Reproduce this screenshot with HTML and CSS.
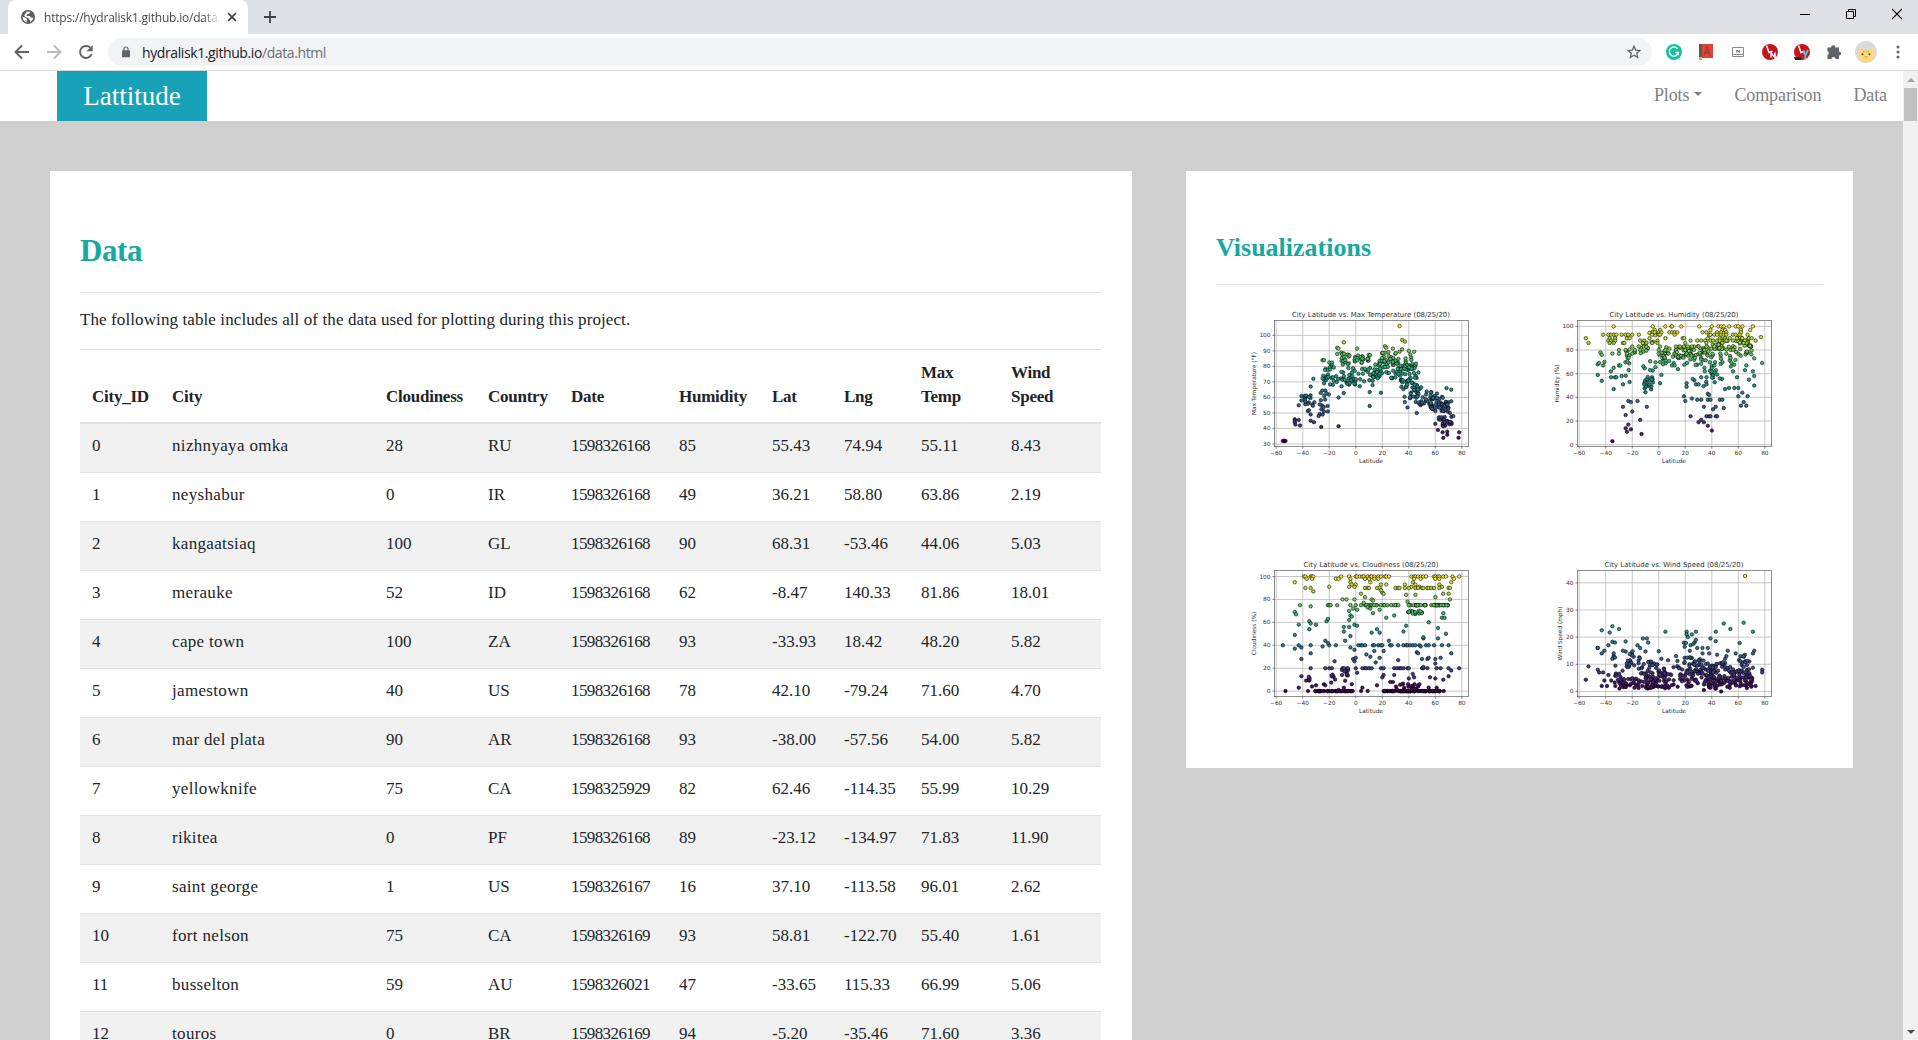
FILE: index.html
```html
<!DOCTYPE html>
<html lang="en">
<head>
<meta charset="utf-8">
<title>Lattitude - Data</title>
<link rel="stylesheet" href="styles.css">
</head>
<body>
<div class="browser">
  <header class="tabstrip">
    <div class="tab">
      <svg class="globe" width="14" height="14" viewBox="0 0 14 14"><circle cx="7" cy="7" r="7" fill="#5a5e63"/><path d="M1.6 6.4 5 8.300q1.600.500 1 1.800l-.6 2.300Q2 11.500 1.600 6.400zM5.800 1.700h3.400L8 3.700 6.200 4.300 5.500 6.100h3.300l1 1.500 2.500.2Q11.800 11 9 12.200l.3-2.100-1.600-.900-.4-1.500-3-.5-1.100-1.800z" fill="#fff"/></svg>
      <span class="tab-title">https://hydralisk1.github.io/data.</span>
      <svg class="tab-close" width="10" height="10" viewBox="0 0 10 10"><path d="M1.200 1.200l7.600 7.600M8.800 1.200 1.200 8.800" stroke="#3c4043" stroke-width="1.700"/></svg>
    </div>
    <svg class="new-tab" width="12" height="12" viewBox="0 0 12 12"><path d="M6 0v12M0 6h12" stroke="#3c4043" stroke-width="1.800"/></svg>
    <div class="window-buttons">
      <svg width="10" height="12" viewBox="0 0 10 12"><path d="M0 6.500h10" stroke="#000"/></svg>
      <svg width="10" height="12" viewBox="0 0 10 12"><path d="M.5 3.500h7v7h-7zM2.500 3.500v-2h7v7h-2" fill="none" stroke="#000"/></svg>
      <svg width="10" height="12" viewBox="0 0 10 12"><path d="M0 1l10 10M10 1 0 11" stroke="#000" stroke-width="1.100"/></svg>
    </div>
  </header>
  <div class="toolbar">
    <svg class="nav-icon" width="16" height="16" viewBox="0 0 16 16"><path d="M15 8H2M8 1.500 1.500 8 8 14.500" fill="none" stroke="#5f6368" stroke-width="1.900"/></svg>
    <svg class="nav-icon" width="16" height="16" viewBox="0 0 16 16"><path d="M1 8h13M8 1.500 14.500 8 8 14.500" fill="none" stroke="#babcbe" stroke-width="1.900"/></svg>
    <svg class="nav-icon" width="16" height="16" viewBox="0 0 16 16"><path d="M13.600 10.200A6 6 0 1 1 12.300 3.700" fill="none" stroke="#5f6368" stroke-width="1.900"/><path d="M14.700 1v6.200H8.500z" fill="#5f6368"/></svg>
    <div class="omnibox">
      <svg width="8" height="12" viewBox="0 0 8 12"><path d="M2 5V3a2 2 0 0 1 4 0v2" fill="none" stroke="#5f6368" stroke-width="1.200"/><rect y="4.300" width="8" height="7" rx=".8" fill="#5f6368"/></svg>
      <span class="url">hydralisk1.github.io<span class="path">/data.html</span></span>
      <svg class="star" width="14" height="14" viewBox="0 0 14 14"><path d="M7 1.200 8.700 5.100l4.200.4-3.200 2.800 1 4.200L7 10.300l-3.700 2.200 1-4.200L1.100 5.500l4.200-.4z" fill="none" stroke="#5f6368" stroke-width="1.300"/></svg>
    </div>
    <div class="extensions">
      <svg width="16" height="16" viewBox="0 0 16 16"><circle cx="8" cy="8" r="8" fill="#15c39a"/><path d="M11.500 4.700A4.600 4.600 0 1 0 12.400 8.500H9M12.400 8.500l-.5 2.700" fill="none" stroke="#fff" stroke-width="1.400"/></svg>
      <svg width="16" height="16" viewBox="0 0 16 16"><path d="M1 0h14v15H1z" fill="#db4437"/><path d="M1 0h3v13H1z" fill="#5f5656"/><path d="M4 14h11v1H4z" fill="#fff"/><path d="M1 13h3v3H1z" fill="#f4b400"/><path d="M6 11.500 9 3l3 8.500M7 8.500h4" fill="none" stroke="#ad352c" stroke-width="1.300"/></svg>
      <svg width="16" height="16" viewBox="0 0 16 16"><path d="M2.500 3.500h11v9h-11zM2.500 10.500h11" fill="#fafafa" stroke="#8b8b8b"/><path d="M6.800 8.500V6l2.400 2.500V6" fill="none" stroke="#555" stroke-width=".9"/></svg>
      <svg width="16" height="16" viewBox="0 0 16 16"><circle cx="8" cy="8" r="8" fill="#c9141b"/><path d="M4.500 1.500 7 8.500l3.500-1.300M9 13.500 9 9l4 4.500V8.500" fill="none" stroke="#fff" stroke-width="1.500"/></svg>
      <svg width="16" height="16" viewBox="0 0 16 16"><circle cx="8" cy="8" r="8" fill="#c9141b"/><path d="M4.500 1.500 7 8.500l3.500-1.300" fill="none" stroke="#fff" stroke-width="1.500"/><path d="M0 13l7 .5V16H1z" fill="#222"/><path d="M9 7l2.500 4L14 6M11.500 10 11 16" fill="none" stroke="#4fd0d8" stroke-width="1.800"/></svg>
      <svg width="16" height="16" viewBox="0 0 16 16"><path d="M1.500 3.500H5a2.200 2.200 0 1 1 4.400 0h3.600v3.900a2.100 2.100 0 1 1 0 4.200V15H9.600a2.100 2.100 0 0 0-4.200 0H1.500v-4a2.100 2.100 0 0 0 0-3.900z" fill="#5f6368"/></svg>
      <svg class="avatar" width="22" height="22" viewBox="0 0 22 22"><circle cx="11" cy="11" r="11" fill="#dadada"/><path d="M4.500 6.500 8.500 9.500h5l4-3q1.200 3 .8 10Q15.500 21.500 11 21.500T3.700 16.500Q3.300 9.500 4.500 6.500z" fill="#fdd978"/><circle cx="7.500" cy="13.300" r="1" fill="#4f4631"/><circle cx="14.500" cy="13.300" r="1" fill="#4f4631"/><path d="M9.500 15.500q.8 1 1.500 0 .8 1 1.500 0M8.800 9.500v2M11 9.500v2M13.200 9.500v2" fill="none" stroke="#c98d3d" stroke-width=".8"/></svg>
      <svg class="kebab" width="4" height="14" viewBox="0 0 4 14"><circle cx="2" cy="2" r="1.500" fill="#5f6368"/><circle cx="2" cy="7" r="1.500" fill="#5f6368"/><circle cx="2" cy="12" r="1.500" fill="#5f6368"/></svg>
    </div>
  </div>
  <div class="viewport">
    <div class="page">
      <nav class="navbar">
        <a class="brand">Lattitude</a>
        <div class="links"><a class="plots">Plots<i class="caret"></i></a><a class="comparison">Comparison</a><a class="data-link">Data</a></div>
      </nav>
      <main class="content">
        <section class="card data-card">
          <h1>Data</h1>
          <p class="intro">The following table includes all of the data used for plotting during this project.</p>
          <table>
            <colgroup><col class="c-id"><col class="c-city"><col class="c-cloud"><col class="c-country"><col class="c-date"><col class="c-hum"><col class="c-lat"><col class="c-lng"><col class="c-temp"><col class="c-wind"></colgroup>
            <thead><tr><th>City_ID</th><th>City</th><th>Cloudiness</th><th>Country</th><th>Date</th><th>Humidity</th><th>Lat</th><th>Lng</th><th>Max<br>Temp</th><th>Wind<br>Speed</th></tr></thead>
            <tbody>
              <tr><td>0</td><td>nizhnyaya omka</td><td>28</td><td>RU</td><td>1598326168</td><td>85</td><td>55.43</td><td>74.94</td><td>55.11</td><td>8.43</td></tr>
              <tr><td>1</td><td>neyshabur</td><td>0</td><td>IR</td><td>1598326168</td><td>49</td><td>36.21</td><td>58.80</td><td>63.86</td><td>2.19</td></tr>
              <tr><td>2</td><td>kangaatsiaq</td><td>100</td><td>GL</td><td>1598326168</td><td>90</td><td>68.31</td><td>-53.46</td><td>44.06</td><td>5.03</td></tr>
              <tr><td>3</td><td>merauke</td><td>52</td><td>ID</td><td>1598326168</td><td>62</td><td>-8.47</td><td>140.33</td><td>81.86</td><td>18.01</td></tr>
              <tr><td>4</td><td>cape town</td><td>100</td><td>ZA</td><td>1598326168</td><td>93</td><td>-33.93</td><td>18.42</td><td>48.20</td><td>5.82</td></tr>
              <tr><td>5</td><td>jamestown</td><td>40</td><td>US</td><td>1598326168</td><td>78</td><td>42.10</td><td>-79.24</td><td>71.60</td><td>4.70</td></tr>
              <tr><td>6</td><td>mar del plata</td><td>90</td><td>AR</td><td>1598326168</td><td>93</td><td>-38.00</td><td>-57.56</td><td>54.00</td><td>5.82</td></tr>
              <tr><td>7</td><td>yellowknife</td><td>75</td><td>CA</td><td>1598325929</td><td>82</td><td>62.46</td><td>-114.35</td><td>55.99</td><td>10.29</td></tr>
              <tr><td>8</td><td>rikitea</td><td>0</td><td>PF</td><td>1598326168</td><td>89</td><td>-23.12</td><td>-134.97</td><td>71.83</td><td>11.90</td></tr>
              <tr><td>9</td><td>saint george</td><td>1</td><td>US</td><td>1598326167</td><td>16</td><td>37.10</td><td>-113.58</td><td>96.01</td><td>2.62</td></tr>
              <tr><td>10</td><td>fort nelson</td><td>75</td><td>CA</td><td>1598326169</td><td>93</td><td>58.81</td><td>-122.70</td><td>55.40</td><td>1.61</td></tr>
              <tr><td>11</td><td>busselton</td><td>59</td><td>AU</td><td>1598326021</td><td>47</td><td>-33.65</td><td>115.33</td><td>66.99</td><td>5.06</td></tr>
              <tr><td>12</td><td>touros</td><td>0</td><td>BR</td><td>1598326169</td><td>94</td><td>-5.20</td><td>-35.46</td><td>71.60</td><td>3.36</td></tr>
            </tbody>
          </table>
        </section>
        <aside class="card viz-card">
          <h2>Visualizations</h2>
          <div class="plots-grid">
            <svg class="plot" id="temperature" width="250" height="167" viewBox="0 0 250 167"></svg>
            <svg class="plot" id="humidity" width="250" height="167" viewBox="0 0 250 167"></svg>
            <svg class="plot" id="cloudiness" width="250" height="167" viewBox="0 0 250 167"></svg>
            <svg class="plot" id="wind" width="250" height="167" viewBox="0 0 250 167"></svg>
          </div>
        </aside>
      </main>
    </div>
    <div class="scrollbar"><i class="up"></i><div class="thumb"></div><i class="down"></i></div>
  </div>
</div>
<script src="charts.js"></script>
</body>
</html>
```
FILE: styles.css
```css
* { box-sizing: border-box; }
body { margin: 0; height: 1040px; overflow: hidden; font-family: "Liberation Serif", serif; font-size: 17px; color: #212529; }
.browser { display: flex; flex-direction: column; height: 1040px; }
svg { display: block; flex: none; }

.tabstrip { display: flex; height: 34px; padding-left: 8px; background: #dee1e6; font-family: "Open Sans", sans-serif; }
.tab { display: flex; align-items: center; width: 240px; padding-left: 13px; background: #fff; border-radius: 8px 8px 0 0; }
.tab-title { width: 177px; margin-left: 9px; overflow: hidden; white-space: nowrap; font-size: 12px; letter-spacing: -.2px; color: #45494d; -webkit-mask-image: linear-gradient(90deg, #000 90%, transparent 100%); }
.tab-close { margin-left: 6px; }
.new-tab { margin: 11px 0 0 16px; }
.window-buttons { display: flex; gap: 36px; margin: 8px 16px 0 auto; }
.toolbar { display: flex; align-items: center; height: 37px; padding-left: 14px; border-bottom: 1px solid #d8d9db; background: #fff; }
.nav-icon { margin-right: 16px; }
.omnibox { display: flex; align-items: center; width: 1544px; height: 28px; margin-left: -2px; padding: 0 11px 0 14px; border-radius: 14px; background: #f1f3f4; }
.url { margin-left: 12px; font: 14px "Open Sans", sans-serif; letter-spacing: -.4px; color: #202124; }
.path { color: #6b6f74; }
.star { margin-left: auto; }
.extensions { display: flex; align-items: center; gap: 16px; margin-left: 14px; }
.avatar { margin-left: -3px; }
.kebab { margin-left: 3px; }

.viewport { display: flex; flex: 1; min-height: 0; }
.page { width: 1903px; overflow: hidden; background: #d0d0d0; }
.navbar { display: flex; justify-content: space-between; height: 50px; padding: 0 16px 0 57px; background: #fff; }
.brand { width: 150px; background: #17a2b8; color: #fff; font-size: 27px; line-height: 50px; text-align: center; }
.links { display: flex; gap: 32px; color: #808080; font-size: 18px; letter-spacing: -.1px; line-height: 48px; }
.caret { display: inline-block; margin-left: 5px; vertical-align: 5px; border: 4.500px solid transparent; border-top-color: #808080; border-bottom: 0; }
.content { display: flex; align-items: flex-start; gap: 54px; padding: 50px 50px 0; }
.card { flex: none; background: #fff; }
.data-card { width: 1082px; height: 900px; padding: 60px 31px 0 30px; overflow: hidden; }
.viz-card { width: 667px; height: 597px; padding: 60px 30px 0; }
h1, h2 { margin: 0; color: #17a99f; font-weight: 700; border-bottom: 1px solid #e3e3e3; }
h1 { height: 62px; font-size: 31px; line-height: 40px; letter-spacing: -.4px; }
h2 { height: 54px; font-size: 26px; line-height: 33px; }
.intro { height: 56px; margin: 0; line-height: 54px; letter-spacing: .1px; white-space: nowrap; }
table { width: 1021px; table-layout: fixed; border-collapse: separate; border-spacing: 0; line-height: 24px; }
th, td { border-top: 1px solid #dee2e6; text-align: left; white-space: nowrap; }
th { height: 75px; padding: 11px 0 13px 12px; vertical-align: bottom; border-bottom: 2px solid #dee2e6; letter-spacing: -.25px; }
td { height: 49px; padding: 10px 0 14px 12px; }
td:nth-child(2) { letter-spacing: .33px; }
td:nth-child(5) { letter-spacing: -.6px; }
tbody tr:first-child td { border-top: 0; height: 48px; }
tbody tr:nth-child(odd) { background: #f1f1f1; }
.c-id { width: 80px; }
.c-city { width: 214px; }
.c-cloud { width: 102px; }
.c-country { width: 83px; }
.c-date { width: 108px; }
.c-hum { width: 93px; }
.c-lat { width: 72px; }
.c-lng { width: 77px; }
.c-temp { width: 90px; }
.c-wind { width: 102px; }
.plots-grid { display: grid; grid-template-columns: 1fr 1fr; grid-auto-rows: 250px; justify-items: center; margin-top: 15px; }
.plot text { font-family: "DejaVu Sans", sans-serif; fill: #333; }
.tick { font-size: 5.800px; }
.title { font-size: 6.950px; }

.scrollbar { display: flex; flex-direction: column; align-items: center; width: 15px; background: #f1f1f1; }
.up, .down { width: 0; height: 0; border: 4px solid transparent; }
.up { margin-top: 7px; border-top: 0; border-bottom: 4px solid #a3a3a3; }
.down { margin: auto 0 6px; border-bottom: 0; border-top: 4px solid #505050; }
.thumb { width: 13px; height: 33px; margin-top: 6px; background: #c1c1c1; }
```
FILE: charts.js
```js
const NS = 'http://www.w3.org/2000/svg';
const VIRIDIS = [[68,1,84],[72,40,120],[62,74,137],[49,104,142],[38,130,142],[31,158,137],[53,183,121],[109,205,89],[180,222,44],[253,231,37]];
const BOX = { left: 31.5, right: 225.5, top: 20.5, bottom: 146.7 };

function random(seed) {
  return () => { seed = (seed * 1664525 + 1013904223) >>> 0; return seed / 4294967296; };
}
function colour(t) {
  const p = Math.max(0, Math.min(.9999, t)) * 9, i = Math.floor(p), f = p - i;
  return `rgb(${VIRIDIS[i].map((c, k) => Math.round(c + (VIRIDIS[i + 1][k] - c) * f))})`;
}
function add(parent, name, attrs, text) {
  const e = document.createElementNS(NS, name);
  for (const k in attrs) e.setAttribute(k, attrs[k]);
  if (text) e.textContent = text;
  parent.appendChild(e);
}

/* bands: [lat0, lat1, low0, high0, low1, high1, count]; rows: [value, [lat, ...]] */
function draw(id, cfg) {
  const svg = document.getElementById(id), rnd = random(cfg.seed);
  const X = lat => 33.2 + (lat + 60) * 1.326;
  const Y = v => cfg.y0 - (v - cfg.v0) * cfg.scale;
  const line = (x1, y1, x2, y2, stroke, w) => add(svg, 'line', { x1, y1, x2, y2, stroke, 'stroke-width': w });
  for (let lat = -60; lat <= 80; lat += 20) {
    line(X(lat), BOX.top, X(lat), BOX.bottom, '#b0b0b0', .7);
    line(X(lat), BOX.bottom, X(lat), BOX.bottom + 2, '#333', .6);
    add(svg, 'text', { x: X(lat), y: 155, class: 'tick', 'text-anchor': 'middle' }, String(lat).replace('-', '\u2212'));
  }
  for (const v of cfg.ticks) {
    line(BOX.left, Y(v), BOX.right, Y(v), '#b0b0b0', .7);
    line(BOX.left - 2, Y(v), BOX.left, Y(v), '#333', .6);
    add(svg, 'text', { x: BOX.left - 4, y: Y(v) + 2, class: 'tick', 'text-anchor': 'end' }, String(v));
  }
  const pts = [];
  for (const [a, b, l0, h0, l1, h1, n] of cfg.bands)
    for (let i = 0; i < n * cfg.density; i++) {
      const t = rnd(), lo = l0 + (l1 - l0) * t, hi = h0 + (h1 - h0) * t;
      pts.push([a + (b - a) * t, lo + (hi - lo) * rnd()]);
    }
  for (const [v, lats] of cfg.rows || []) for (const lat of lats) pts.push([lat, v]);
  pts.push(...cfg.points);
  for (const [lat, v] of pts)
    add(svg, 'circle', { cx: X(lat).toFixed(2), cy: Y(v).toFixed(2), r: 1.750, fill: colour((v - cfg.min) / (cfg.max - cfg.min)), stroke: '#000', 'stroke-width': .550 });
  add(svg, 'rect', { x: BOX.left, y: BOX.top, width: 194, height: 126.2, fill: 'none', stroke: '#444', 'stroke-width': .6 });
  add(svg, 'text', { x: 128, y: 17, class: 'title', 'text-anchor': 'middle', textLength: cfg.titleWidth }, 'City Latitude vs. ' + cfg.title + ' (08/25/20)');
  add(svg, 'text', { x: 128, y: 163.300, class: 'tick', 'text-anchor': 'middle' }, 'Latitude');
  add(svg, 'text', { transform: `translate(${cfg.labelX} 83.5) rotate(-90)`, class: 'tick', 'text-anchor': 'middle' }, cfg.label);
}

draw('temperature', {
  seed: 7, density: .66, title: 'Max Temperature', titleWidth: 158, label: 'Max Temperature (\u00b0F)', labelX: 12.500,
  v0: 30, y0: 144, scale: 1.552, min: 32, max: 106, ticks: [30,40,50,60,70,80,90,100],
  bands: [[-39,-31,51,61,50,63,25],[-29,-19,48,63,55,67,20],[-26,-16,68,78,71,83,30],[-20,-8,57,72,60,76,14],
    [-11,0,67,79,68,79,40],[-11,0,81,89,82,87,32],[0,13,66,80,68,80,25],[1,11,81,88,83,89,28],
    [13,20,70,80,74,86,35],[18,32,79,89,80,90,48],[26,46,71,84,68,81,52],[32,46,78,91,77,86,27],
    [34,47,60,73,59,73,42],[44,58,55,69,54,64,57],[56,70,51,64,51,61,52],[62,73,41,49,42,48,34],[60,70,51,57,50,56,28],[12,49,75,79,75,81,30]],
  points: [[33,106],[35,97],[37,96],[-9,95.5],[-14,92],[-13,91.5],[1,91.5],[22,93],[23,92],[28,91.5],[35,91],[40,90],[44,89.5],[-25,84],[-24,84],[-14,88],[-20,82.5],[-18,82.5],[-32,72],[-34,67],[10.5,63.5],[19,63],[10.5,54.5],[-13,41.5],[-26,41],[-46,46],[-46,45],[-43,45.5],[-46,44],[-45.5,42.5],[-42,42],[-54,32],[-53,32],[-55,32],[-34,45],[-31.5,44],[-41,61],[-41,58],[-43,55],[-34,49],[-28,48],[-25,49],[-21,51],[-24,51],[78,37.5],[77.5,34],[66,34],[65.5,37.5],[69,36],[72,65],[68.5,66],[72,57.5],[62,39],[60,43],[69,38],[73.5,48],[71,50],[46,50],[39,53.5],[37,57]]
});
draw('humidity', {
  seed: 21, density: .62, title: 'Humidity', titleWidth: 129, label: 'Humidity (%)', labelX: 13,
  v0: 0, y0: 144.7, scale: 1.183, min: 3, max: 100, ticks: [0,20,40,60,80,100],
  bands: [[-26,-16,70,80,77,84,12],[-19,-3,76,83,80,92,22],[-12,-2,50,70,49,73,26],[-11,-5,43,58,45,58,14],[0,15,68,83,67,83,38],
    [13,35,73,84,74,83,66],[13,35,62,74,68,79,20],[34,50,72,86,73,84,32],[45,70,80,90,76,91,46],[25,48,52,74,53,73,30],[48,60,64,82,66,84,18],[60,70,75,97,76,93,28],
    [33,41,48,67,48,63,10],[-8,2,90,96,93,99,8],[-26,-20,56,72,61,72,8]],
  rows: [[100,[-34,-4.5,5,9.5,10,17,30.5,40,45,47,49,53,58,60,63,71]],[97,[-3,1,39,48,50,62,69]],[95,[-3,0,2,8,10,12,14,33,36,44,47,51,62]],
    [93,[-42,-38,-36,-34,-32,-28,-25,-23,-20,-15,-5,0,1,12,38,39,42,44,47,49,51,56,58,61,67]],[90,[-37,-33,-24,-22,-7,5,18,19,37,46,50,59,63,68,70]],[88,[-38,-36,-33,-14,-11,-1,24,29,32,35,39,41,44,46,50,51,56,65,73]],[86,[-37,-34,-27,-26,-12,-5,-1,20,36,48,64]],
    [83,[-20,-15,1,13,16,19,22,25,30,36,42]],[80,[-30,-25,-18,-14,0,5,20]],[77,[-35,-30,-24,-20,0,21]],[67,[-30,-29,-42,10,12,42]],[57,[-36,-33,-32,32,36,59]],[51,[-27,-11,-7,28,30,36]],[48,[53,57,60]],[38,[29,32,37,39,46,48]],[24,[24,36,38,39,43,44]]],
  points: [[-55,90],[-53,86],[-44,78],[-43,76],[-41,70],[-46,68],[-45,69],[-46,59],[-43,54],[-36,62],[-34,65],[-34,47],[-28,58],[-22,53],[-27,32],[-23,37],[-21,36],[-16,37],[-9,32],[-20,28],[-25,25],[-14,21],[-25,14],[-23,17],[-21,13],[-24,11],[-13,9],[-35,3],[1,52],[2,59],[19,41],[20,37],[25,39],[34,32],[41,30],[43,32],[49,31],[46,56],[50,47],[56,62],[63,44],[60,41],[67,41],[62,33],[64,36],[66,33],[72,50],[68,55],[72,58],[78,69],[72,73],[66,67],[65,63],[71,62],[77,91],[30,19],[32,21],[34,19],[37,16],[40,12],[21,52],[21,49],[37,43],[38,42]]
});
draw('cloudiness', {
  seed: 42, density: .85, title: 'Cloudiness', titleWidth: 135, label: 'Cloudiness (%)', labelX: 12.500,
  v0: 0, y0: 141.1, scale: 1.146, min: 0, max: 100, ticks: [0,20,40,60,80,100],
  bands: [[-31,-2,0,0,0,0,42],[20,53,0,0,0,0,60],[54,68,0,0,0,0,18],[28,48,1,7,1,6,18],[-12,-5,13,20,13,20,12],[38,70,75,75,75,75,42],[8,37,75,75,75,75,18],[38,50,66,70,67,70,16],[-38,-34,9,15,8,14,7],[-19,-15,7,14,8,15,7]],
  rows: [[100,[-39,-38,-34,-33,-32,-11,-5,0,1,3,5,6,9,11,12,14,17,19,22,23,25,42,44,45,47,49,51,53,59,60,62,63,66,68,73,78]],
    [98,[-37,-33,-15,-13,-4,7,10,14,17,44,49,60,63,74]],[95,[-46,-4,11,43,72]],[93,[-3,0,19,23,37,45,63]],[91,[-20,-5,-1,42,48,65]],[90,[-38,-34,7,9,10,16,18,30,32,33,37,40,45,47,50,51,54,55,57,59,63,70,71]],
    [80,[-10,-7,-1,12,71]],[75,[-42,-21,-20,-19,-14,-4,0,4,7,8]],[40,[-55,-43,-34,-20,-15,2,4,5,7,13,14,17,19,20,26,27,32,36,38,39,41,43,45,48,53,55,59,65,70]],[20,[-34,-23,-20,-18,-10,-9,-6,0,5,7,8,10,12,19,21,29,31,33,34,36,39,40,50,51,54,61,64,70,78]],[0,[-53,-36,4,9]]],
  points: [[-32,87],[-34,74],[-46,69],[-45,67],[-43,58],[-46,49],[-35,61],[-34,59],[-30,58],[-35,54],[-22,61],[-21,63],[-46,37],[-41,38],[-41,28],[-34,33],[-25,39],[-23,44],[-21,42],[-9,56],[-9,52],[-5,56],[-5,62],[-1,58],[1,57],[-4,66],[-3,65],[-5,70],[-2,72],[1,71],[4,85],[7,82],[6,77],[9,73],[13,79],[11,72],[13,68],[18,71],[20,86],[21,85],[19,88],[23,64],[29,66],[-8,44],[-4,48],[-4,38],[-1,36],[8,32],[11,30],[12,51],[16,54],[18,51],[14,35],[21,35],[25,44],[36,52],[38,57],[39,78],[38,84],[45,84],[55,60],[62,55],[68,50],[51,46],[51,47],[62,46],[66,68],[65,64],[67,64],[60,82],[66,85],[70,85],[72,33],[49,39],[-2,28],[0,29],[-1,26],[18,29],[15,25],[32,27],[46,34],[47,33],[50,28],[54,28],[55,29],[60,28],[64,29],[60,24],[72,18],[-43,3],[-41,13],[-33,4],[-30,5],[-24,6],[-23,5],[-16,26],[-3,6],[5,3],[16,5],[21,14],[20,12],[29,14],[43,15],[44,12],[40,11],[60,11],[66,10],[70,13],[51,21],[56,12],[1,16],[35,6],[47,4],[48,6],[61,3],[55,3],[26,8],[28,8],[-8,9],[-9,3],[-13,1]]
});
draw('wind', {
  seed: 99, density: .74, title: 'Wind Speed', titleWidth: 139, label: 'Wind Speed (mph)', labelX: 15.500,
  v0: 0, y0: 141.4, scale: 2.715, min: 0, max: 42.5, ticks: [0,10,20,30,40],
  bands: [[-36,-26,1,10,1,9,28],[-27,-17,1,5,1,5,22],[-25,-18,7,15,8,15,24],[-16,0,1,13,1,10,75],[-11,1,1,7,1,7,26],[0,14,1,8,1,10,48],
    [14,26,1,12,2,14,45],[23,42,3,12,2,12,85],[37,52,1,10,1,11,92],[52,71,1,9,1,9,82],[60,70,5,13,4,13,30],[19,24,12,18,12,19,9]],
  points: [[65,42.5],[-43,22.5],[-37,21.7],[-35,24],[-30,23],[5,22],[21,22],[21,21],[25,21],[28,22],[22,20],[49,25],[54,23],[64,25.3],[71,22],[43,22],[39,19.5],[43,18.5],[61,17.8],[-46,16],[-46,16],[-41,15],[-43,14],[-38,17],[-35,18.3],[-33,18],[-25,18.4],[-27,15],[-12,19.5],[-9,19.5],[-8,18],[-16,17],[-14,16],[-10,14.7],[0,14.8],[-53,9.2],[-55,4.3],[-46,8],[-45,7],[-42,7],[-41,4],[-43,2],[-38,6],[-39,2],[24,17],[27,18],[29,16],[33,16],[37,16],[26,17.500],[28,19],[52,15],[51,13],[50,12],[58,14],[72,15],[71,14],[65,13.500],[64,13],[78,8],[78,7],[73,2],[44,13.500],[33,14],[38,14],[47,0],[34,.5],[2,12],[7,11.500],[13,13],[-34,13],[-35,12],[-33,12.500],[-34,14]]
});
```
